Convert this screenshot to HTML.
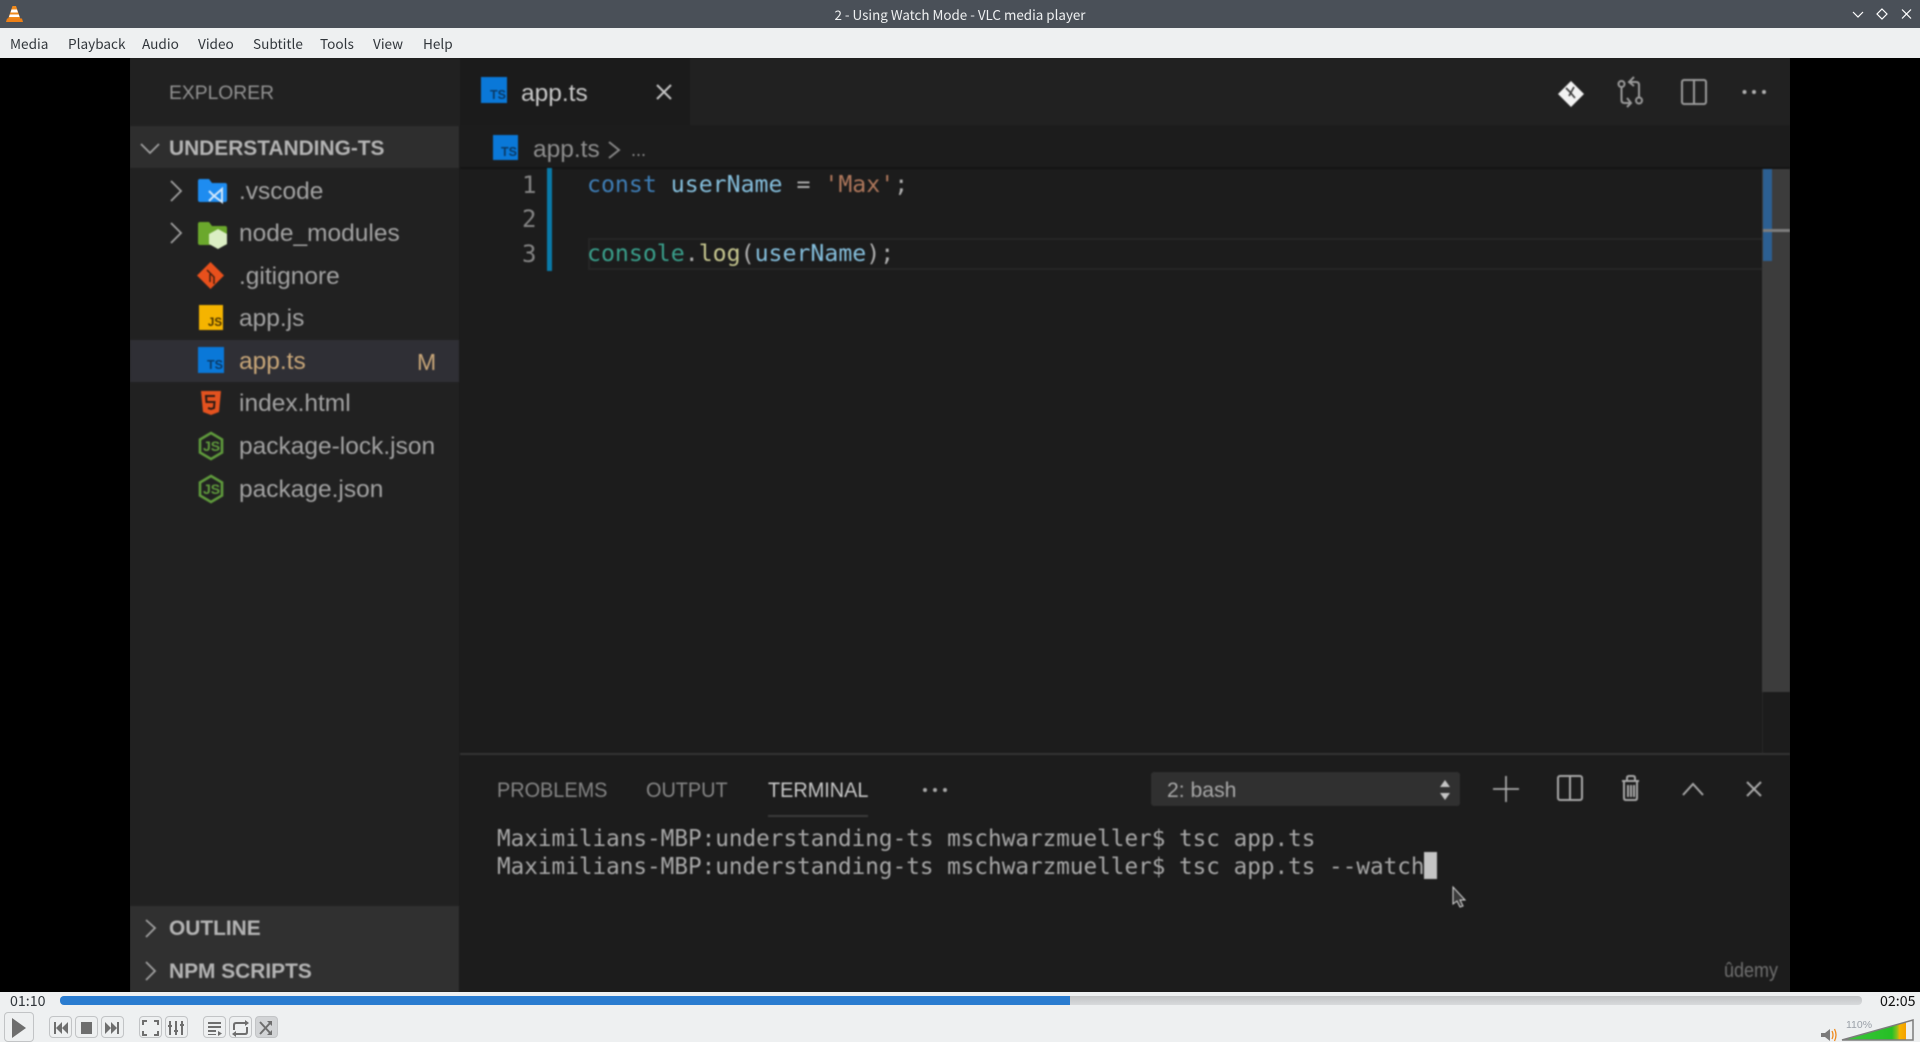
<!DOCTYPE html>
<html><head><meta charset="utf-8"><title>VLC</title>
<style>
html,body{margin:0;padding:0;background:#eef0f1;width:1920px;height:1042px;overflow:hidden}
div,span,svg{position:absolute;white-space:pre}
body{font-family:"Liberation Sans",sans-serif}
.r{left:0;top:0}
.ui{font-family:"Noto Sans CJK JP","Liberation Sans",sans-serif;font-size:13.6px;color:#31363b;line-height:20px;top:33px}
.f{left:239px;font-size:24.5px;line-height:30px;color:#a2a2a2}
.b{font-weight:bold;font-size:20.9px;line-height:24px;color:#b4b4b4;left:169px}
.m{font-family:"DejaVu Sans Mono","Liberation Mono",monospace}
.c{font-size:23.2px;line-height:30px;left:587px}
.t{font-size:22.66px;line-height:28px;left:497px;color:#a8a8a8}
.n{font-size:24px;line-height:30px;color:#858585;left:520px}
.p{font-size:21.6px;line-height:26px;top:777px;color:#858585;transform:scaleX(.92);transform-origin:0 0}
.btn{top:1016px;width:22px;height:22px;border:1px solid #c2c4c6;border-radius:4px;box-sizing:border-box;background:#eef0f1}
.ts{background:#0a78d8;color:#0b3a66;font-weight:bold;font-size:12.5px;text-align:right;box-sizing:border-box;padding-right:1px}
</style></head><body>
<div style="left:0;top:0;width:1920px;height:28px;background:#4a5058"></div>
<svg style="left:6px;top:5px" width="17" height="18" viewBox="0 0 17 18"><path d="M6.500 1h3.500l4.500 13H2z" fill="#f08a1c"/><path d="M5.500 4.500h5.500l1 3H4.500z" fill="#fff"/><path d="M1 13.500h15l1 3.500H0z" fill="#ee8016"/><path d="M3.800 9.500h9l.8 2.500H3z" fill="#fff"/></svg>
<div style="left:660px;width:600px;top:4px;text-align:center;color:#eef0f1;font-size:13.4px;line-height:20px;font-family:'Noto Sans CJK JP','Liberation Sans',sans-serif">2 - Using Watch Mode - VLC media player</div>
<svg class="r" width="1920" height="28" fill="none" stroke="#fff" stroke-width="1.200"><path d="M1853 12l5 5 5-5M1882 9l5 5-5 5-5-5zM1902 9.500l9 9M1911 9.500l-9 9"/></svg>
<div style="left:0;top:28px;width:1920px;height:30px;background:#eef0f1"></div>
<span class="ui" style="left:10px">Media</span><span class="ui" style="left:68px">Playback</span><span class="ui" style="left:142px">Audio</span><span class="ui" style="left:198px">Video</span><span class="ui" style="left:253px">Subtitle</span><span class="ui" style="left:320px">Tools</span><span class="ui" style="left:373px">View</span><span class="ui" style="left:423px">Help</span>

<div style="left:0;top:58px;width:1920px;height:934px;background:#000"></div>
<div style="left:130px;top:58px;width:1660px;height:934px;background:#1c1c1c;overflow:hidden">
<div style="left:0;top:0;width:1660px;height:934px;filter:blur(.8px)">
 <div style="left:-130px;top:-58px;width:1920px;height:1042px">
 <div style="left:130px;top:58px;width:329px;height:934px;background:#212121"></div>
 <div style="left:130px;top:126px;width:329px;height:42px;background:#2e2e2e"></div>
 <div style="left:130px;top:340px;width:329px;height:42px;background:#2f2f35"></div>
 <div style="left:130px;top:906px;width:329px;height:86px;background:#303030"></div>
 <div style="left:459px;top:58px;width:1331px;height:68px;background:#212121"></div>
 <div style="left:460px;top:58px;width:230px;height:67px;background:#1b1b1b"></div>
 <div style="left:460px;top:125px;width:1330px;height:43px;background:#1c1c1c"></div>
 <div style="left:460px;top:167px;width:1330px;height:2px;background:#141414"></div>
 <div style="left:588px;top:238px;width:1174px;height:32px;box-sizing:border-box;border:2px solid #262626;border-right:0"></div>
 <div style="left:1762px;top:169px;width:28px;height:523px;background:#3c3c3c"></div>
 <div style="left:1763px;top:169px;width:9px;height:92px;background:#2c5f92"></div>
 <div style="left:1763px;top:229px;width:27px;height:3px;background:#7c7c7c"></div>
 <div style="left:1762px;top:692px;width:1px;height:62px;background:#2a2a2a"></div>
 <div style="left:460px;top:753px;width:1330px;height:2px;background:#343434"></div>

 <span style="left:169px;top:81px;font-size:19.300px;line-height:26px;color:#929292">EXPLORER</span>
 <span class="b" style="top:137px">UNDERSTANDING-TS</span>
 <svg class="r" width="470" height="1000" fill="none" stroke="#a0a0a0" stroke-width="1.800"><path d="M141 144l9 9 9-9M171 181l10 10-10 10M171 223l10 10-10 10M146 920l9 8-9 9M146 962l9 9-9 9"/></svg>
 <svg class="r" width="470" height="520">
  <path d="M198 181v19q0 2 2 2h25q2 0 2-2v-15q0-2-2-2h-13l-3-4h-9q-2 0-2 2z" fill="#1e8cf0"/><path d="M209 191l5 5 8-7v13l-8-6-5 5" fill="none" stroke="#cfe6fb" stroke-width="2"/>
  <path d="M198 224v19q0 2 2 2h25q2 0 2-2v-15q0-2-2-2h-13l-3-4h-9q-2 0-2 2z" fill="#6ba82c"/><path d="M218 229l9 5v10l-9 5-9-5v-10z" fill="#dbeec4"/>
  <path d="M210.500 262l13.500 13.500-13.500 13.500-13.500-13.500z" fill="#e8501c"/><path d="M207 270l7 7v7M210 274v8" stroke="#3a1e10" stroke-width="1.500" fill="none"/>
  <rect x="199" y="305" width="24" height="25" fill="#f5b400"/>
  <path d="M201 391h20l-2 21-8 3-8-3z" fill="#e4521f"/><path d="M215 396h-9l.5 6h8l-.5 6-3 1-3-1" fill="none" stroke="#2a1a14" stroke-width="2"/>
  <g fill="none" stroke="#5f9a3c" stroke-width="2.600"><path d="M211 433l11 6.500v13l-11 6.500-11-6.500v-13z"/><path d="M211 476l11 6.500v13l-11 6.500-11-6.500v-13z"/></g>
 </svg>
 <span class="ts" style="left:198px;top:347px;width:26px;height:26px;line-height:36px">TS</span>
 <span style="left:199px;top:305px;width:24px;height:25px;text-align:right;font-size:11.500px;font-weight:bold;line-height:36px;color:#4a3400;padding-right:1px;box-sizing:border-box">JS</span>
 <span style="left:203px;top:437px;font-size:14px;line-height:18px;font-weight:bold;color:#5f9a3c">JS</span>
 <span style="left:203px;top:480px;font-size:14px;line-height:18px;font-weight:bold;color:#5f9a3c">JS</span>
 <span class="f" style="top:177px">.vscode</span><span class="f" style="top:219px">node_modules</span><span class="f" style="top:262px">.gitignore</span><span class="f" style="top:304px">app.js</span><span class="f" style="top:347px;color:#c9a779">app.ts</span><span class="f" style="top:389px">index.html</span><span class="f" style="top:432px">package-lock.json</span><span class="f" style="top:475px">package.json</span>
 <span style="left:417px;top:347px;font-size:23px;line-height:30px;color:#c9a779">M</span>
 <span class="b" style="top:917px">OUTLINE</span><span class="b" style="top:960px">NPM SCRIPTS</span>

 <span class="ts" style="left:481px;top:77px;width:26px;height:26px;line-height:36px;font-size:12.500px">TS</span>
 <span style="left:521px;top:79px;font-size:24.500px;line-height:30px;color:#c8c8c8">app.ts</span>
 <svg class="r" width="1920" height="200" fill="none" stroke="#c4c4c4" stroke-width="2"><path d="M657 85l14 14M671 85l-14 14"/><path d="M609 142l10 8-10 8" stroke="#858585"/></svg>
 <span class="ts" style="left:493px;top:135px;width:25px;height:25px;line-height:35px">TS</span>
 <span style="left:533px;top:135px;font-size:24.500px;line-height:30px;color:#8e8e8e">app.ts</span>
 <span style="left:631px;top:137px;font-size:18px;line-height:26px;color:#8e8e8e">...</span>

 <svg class="r" width="1920" height="120" fill="none" stroke="#9a9a9a" stroke-width="2">
  <path d="M1571 81l13 13-13 13-13-13z" fill="#f2f2f2" stroke="none"/><path d="M1566 88l4 4M1574 87l-5 9M1570 92l5 6" stroke="#333" stroke-width="1.600"/>
  <circle cx="1621.500" cy="84" r="3"/><circle cx="1639" cy="100.500" r="3"/><path d="M1621.500 87v13q0 3 3 3h6M1627 98l4 5-4 4M1639 97v-12q0-3-3-3h-6M1634 77l-5 5 5 4"/>
  <rect x="1682" y="80" width="24" height="24" rx="2"/><path d="M1694 80v24"/>
  <g fill="#b0b0b0" stroke="none"><circle cx="1744.500" cy="92" r="2"/><circle cx="1754" cy="92" r="2"/><circle cx="1764" cy="92" r="2"/></g>
 </svg>

 <span class="m n" style="top:170px;left:522px">1</span><span class="m n" style="top:204px;left:522px">2</span><span class="m n" style="top:239px;left:522px">3</span>
 <div style="left:547px;top:168px;width:5px;height:103px;background:#0a7aa8"></div>
 <span class="m c" style="top:170px"><span style="position:static;color:#3f7fb8">const</span> <span style="position:static;color:#85bfdd">userName</span> <span style="position:static;color:#b0b0b0">=</span> <span style="position:static;color:#b0785c">'Max'</span><span style="position:static;color:#b0b0b0">;</span></span>
 <span class="m c" style="top:239px"><span style="position:static;color:#3aa08c">console</span><span style="position:static;color:#b0b0b0">.</span><span style="position:static;color:#c8c890">log</span><span style="position:static;color:#b0b0b0">(</span><span style="position:static;color:#85bfdd">userName</span><span style="position:static;color:#b0b0b0">);</span></span>

 <span class="p" style="left:497px">PROBLEMS</span><span class="p" style="left:646px">OUTPUT</span><span class="p" style="left:768px;color:#c8c8c8">TERMINAL</span>
 <div style="left:768px;top:815px;width:100px;height:2px;background:#3a3a3a"></div>
 <div style="left:1151px;top:772px;width:309px;height:34px;background:#303030;border-radius:3px"></div>
 <svg class="r" width="1920" height="830"><g fill="#a8a8a8"><circle cx="925" cy="790" r="2"/><circle cx="935" cy="790" r="2"/><circle cx="945" cy="790" r="2"/></g>
  <path d="M1440 787l5-7 5 7zM1440 793l5 7 5-7z" fill="#c4c4c4"/>
  <g fill="none" stroke="#a8a8a8" stroke-width="2"><path d="M1493 789h26M1506 776v26" stroke-width="1.800"/><rect x="1558" y="776" width="24" height="24" rx="2"/><path d="M1570 776v24"/><path d="M1622 781h17M1627 781v-3q0-2 2-2h4q2 0 2 2v3M1624 781v17q0 2 2 2h9q2 0 2-2v-17M1628 785v12M1631 785v12M1634 785v12"/><path d="M1683 795l10-11 10 11"/><path d="M1747 782l14 14M1761 782l-14 14"/></g></svg>
 <span style="left:1167px;top:777px;font-size:21.600px;line-height:26px;color:#a8a8a8;transform:scaleX(.98);transform-origin:0 0">2: bash</span>
 <span class="m t" style="top:825px">Maximilians-MBP:understanding-ts mschwarzmueller$ tsc app.ts</span>
 <span class="m t" style="top:853px">Maximilians-MBP:understanding-ts mschwarzmueller$ tsc app.ts --watch</span>
 <div style="left:1424px;top:852px;width:13px;height:27px;background:#c4c4c4"></div>
 <svg class="r" width="1920" height="920"><path d="M1453 887v17l4-3 3 6 3-1-3-6h5z" fill="#3a3a3a" stroke="#ddd" stroke-width="1"/></svg>
 <span style="left:1724px;top:958px;font-size:20px;line-height:26px;color:#707070;transform:scaleX(.9);transform-origin:0 0">ûdemy</span>
 </div>
</div></div>

<div style="left:0;top:992px;width:1920px;height:50px;background:#eef0f1"></div>
<span class="ui" style="left:10px;top:991px;font-size:14.2px">01:10</span>
<span class="ui" style="left:1880px;top:991px;font-size:14.2px;color:#111">02:05</span>
<div style="left:60px;top:996px;width:1802px;height:9px;background:linear-gradient(#c2c4c6,#d8dadc);border-radius:4px"></div>
<div style="left:60px;top:996px;width:1010px;height:9px;background:#2a7cd0;border-radius:4px 0 0 4px"></div>

<div class="btn" style="left:4px;top:1012px;width:30px;height:30px"></div>
<div class="btn" style="left:49px;width:23px"></div><div class="btn" style="left:75px;width:23px"></div><div class="btn" style="left:101px;width:23px"></div>
<div class="btn" style="left:139px;width:23px"></div><div class="btn" style="left:165px;width:23px"></div>
<div class="btn" style="left:203px;width:23px"></div><div class="btn" style="left:229px;width:23px"></div><div class="btn" style="left:255px;width:23px;background:#d2d4d6"></div>
<svg class="r" width="300" height="1042" fill="#6e6e6e">
 <path d="M12 1018v20l14-10z"/>
 <path d="M54 1022h2v12h-2zM56 1028l6-6v12zM62 1028l6-6v12z"/>
 <rect x="81" y="1022" width="11" height="12"/>
 <path d="M119 1022h-2v12h2zM117 1028l-6-6v12zM111 1028l-6-6v12z"/>
 <g fill="none" stroke="#6e6e6e" stroke-width="2"><path d="M143 1025v-4h4M158 1025v-4h-4M143 1031v4h4M158 1031v4h-4"/><path d="M170 1021v14M176 1021v14M182 1021v14"/></g>
 <path d="M168 1025h4v2h-4zM174 1030h4v2h-4zM180 1024h4v2h-4z"/>
 <path d="M208 1022h13v2h-13zM208 1026h13v2h-13zM208 1030h8v2h-8zM208 1034h8v1h-8zM218 1031l4 2.500-4 2.500z"/>
 <g fill="none" stroke="#6e6e6e" stroke-width="2"><path d="M234 1030v-5q0-2 2-2h10M247 1027v5q0 2-2 2h-10"/><path d="M260 1022l11 12M260 1034l11-12"/></g>
 <path d="M245 1020l4 3-4 3zM236 1031l-4 3 4 3zM272 1021v5l-5-5zM272 1035v-5l-5 5z"/>
</svg>
<svg class="r" width="1920" height="1042">
 <path d="M1821 1033h4l5-4v12l-5-4h-4z" fill="#7a7a7a"/>
 <path d="M1832 1031q2 4 0 8M1834.500 1029q3 6 0 12" fill="none" stroke="#ef8a1e" stroke-width="1.300"/>
 <defs><linearGradient id="v" x1="0" x2="1"><stop offset="0" stop-color="#3dc43d"/><stop offset=".78" stop-color="#25c025"/><stop offset=".86" stop-color="#8cc01c"/><stop offset=".9" stop-color="#f5b400"/><stop offset="1" stop-color="#f5a000"/></linearGradient></defs>
 <path d="M1842 1040L1906 1022V1040z" fill="url(#v)"/>
 <path d="M1842 1040L1913 1020V1040z" fill="none" stroke="#7c7c7c" stroke-width="1.500"/>
</svg>
<span style="left:1846px;top:1018px;font-size:10.500px;line-height:14px;color:#9aa0a8">110%</span>
</body></html>
